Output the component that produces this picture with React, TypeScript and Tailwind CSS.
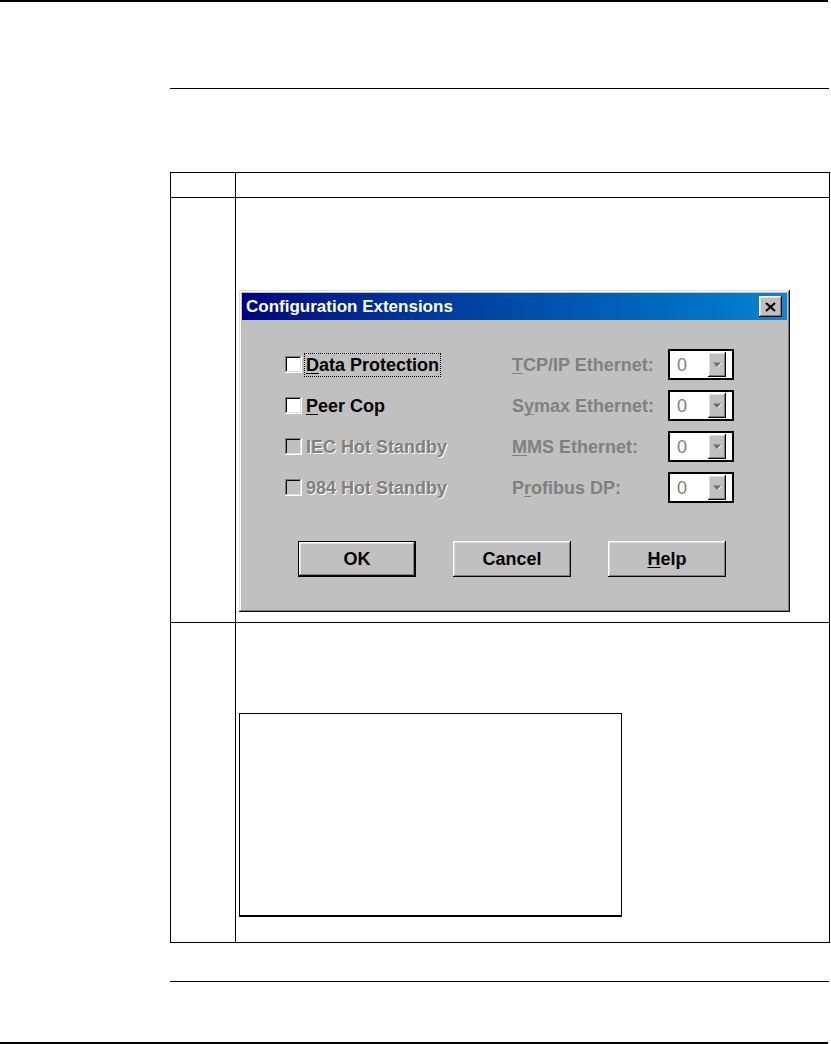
import type { ReactNode } from 'react';

const raised =
  'shadow-[inset_-1px_-1px_#0a0a0a,inset_1px_1px_#ffffff,inset_-2px_-2px_#808080,inset_2px_2px_#dfdfdf]';
const windowFrame =
  'shadow-[inset_-1px_-1px_#0a0a0a,inset_1px_1px_#dfdfdf,inset_-2px_-2px_#808080,inset_2px_2px_#ffffff]';
const sunken =
  'shadow-[inset_-1px_-1px_#ffffff,inset_1px_1px_#808080,inset_-2px_-2px_#dfdfdf,inset_2px_2px_#0a0a0a]';
const key = 'underline underline-offset-2 [text-decoration-skip-ink:none]';

function CheckBox({ disabled }: { disabled?: boolean }) {
  return (
    <div
      className={`w-[17px] h-[17px] shrink-0 ${sunken} ${disabled ? 'bg-[#c0c0c0]' : 'bg-white'}`}
    />
  );
}

function Combo() {
  return (
    <div className="w-[66px] h-[31px] shrink-0 border-2 border-black bg-white flex items-center pl-[7px]">
      <span className="w-[31px] text-[18px] font-normal text-[#808080] leading-none">0</span>
      <div className={`w-[18px] h-[25px] shrink-0 bg-[#c0c0c0] ${raised} flex items-center justify-center`}>
        <svg width="10" height="6" viewBox="0 0 10 6" className="shrink-0">
          <path d="M1 0.5 H9 L5 5 Z" fill="#707070" />
          <path d="M5.5 5.3 L9.5 1" stroke="#ffffff" strokeWidth="1" />
        </svg>
      </div>
    </div>
  );
}

function Row({
  left,
  right,
  checkDisabled,
  focused,
}: {
  left: ReactNode;
  right: ReactNode;
  checkDisabled?: boolean;
  focused?: boolean;
}) {
  return (
    <div className="h-[41px] flex items-center">
      <div className="w-[227px] flex items-center">
        <CheckBox disabled={checkDisabled} />
        <div
          className={`ml-[3px] px-[1px] py-[2px] leading-none ${
            focused ? 'outline-1 outline-dotted outline-black' : ''
          }`}
        >
          {left}
        </div>
      </div>
      <div className="w-[156px] text-[#808080] leading-none">{right}</div>
      <Combo />
    </div>
  );
}

function WinButton({ children, isDefault }: { children: ReactNode; isDefault?: boolean }) {
  return (
    <div
      className={`w-[118px] h-[36px] bg-[#c0c0c0] flex items-center justify-center text-black ${
        isDefault ? 'border border-black' : ''
      } ${raised}`}
    >
      {children}
    </div>
  );
}

function Dialog() {
  const dim = 'text-[#808080] [text-shadow:1px_1px_0_#ffffff]';
  return (
    <div className={`w-[551px] h-[322px] bg-[#c0c0c0] p-[3px] ${windowFrame}`}>
      <div className="h-[27px] bg-gradient-to-r from-[#000080] to-[#1084d0] flex items-center justify-between pl-[4px] pr-[5px]">
        <span className="text-white text-[17px] font-bold leading-none">Configuration Extensions</span>
        <div className={`w-[23px] h-[21px] bg-[#c0c0c0] ${raised} flex items-center justify-center`}>
          <svg width="11" height="10" viewBox="0 0 11 10">
            <path d="M1 1 L10 9 M10 1 L1 9" stroke="#000" strokeWidth="2.2" />
          </svg>
        </div>
      </div>

      <div className="pt-[24px] pl-[43px] text-[18px] font-bold">
        <Row
          focused
          left={
            <span>
              <span className={key}>D</span>ata Protection
            </span>
          }
          right={
            <span>
              <span className={key}>T</span>CP/IP Ethernet:
            </span>
          }
        />
        <Row
          left={
            <span>
              <span className={key}>P</span>eer Cop
            </span>
          }
          right={
            <span>
              S<span className={key}>y</span>max Ethernet:
            </span>
          }
        />
        <Row
          checkDisabled
          left={<span className={dim}>IEC Hot Standby</span>}
          right={
            <span>
              <span className={key}>M</span>MS Ethernet:
            </span>
          }
        />
        <Row
          checkDisabled
          left={<span className={dim}>984 Hot Standby</span>}
          right={
            <span>
              P<span className={key}>r</span>ofibus DP:
            </span>
          }
        />
      </div>

      <div className="mt-[33px] pl-[56px] flex gap-[37px] text-[18px] font-bold">
        <WinButton isDefault>OK</WinButton>
        <WinButton>Cancel</WinButton>
        <WinButton>
          <span>
            <span className={key}>H</span>elp
          </span>
        </WinButton>
      </div>
    </div>
  );
}

export default function App() {
  return (
    <div
      className="w-[831px] h-[1044px] bg-white flex flex-col"
      style={{ fontFamily: '"Liberation Sans", Arial, sans-serif' }}
    >
      <div className="w-[828px] h-[2px] bg-black" />

      <div className="ml-[170px] mt-[86px] w-[659px] h-[1px] bg-black" />

      <div className="ml-[170px] mt-[83px] w-[660px] border border-black">
        {/* header row */}
        <div className="flex h-[25px] border-b border-black">
          <div className="w-[64px]" />
          <div className="flex-1 border-l border-black" />
        </div>

        {/* step 1 */}
        <div className="flex h-[425px] border-b border-black">
          <div className="w-[64px]" />
          <div className="flex-1 border-l border-black pl-[3px] pt-[92px]">
            <Dialog />
          </div>
        </div>

        {/* step 2 */}
        <div className="flex h-[319px]">
          <div className="w-[64px]" />
          <div className="flex-1 border-l border-black pl-[3px] pt-[90px]">
            <div className="w-[383px] h-[204px] border border-black border-b-2 bg-white" />
          </div>
        </div>
      </div>

      <div className="ml-[170px] mt-[38px] w-[659px] h-[1px] bg-black" />

      <div className="mt-[60px] w-[828px] h-[2px] bg-black" />
    </div>
  );
}
